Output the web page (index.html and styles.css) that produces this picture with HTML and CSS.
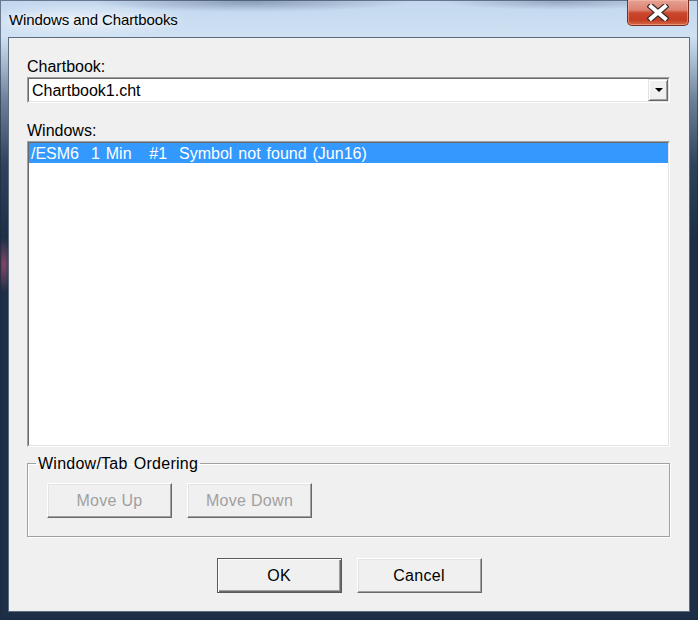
FILE: index.html
```html
<!DOCTYPE html>
<html>
<head>
<meta charset="utf-8">
<title>Windows and Chartbooks</title>
<link rel="stylesheet" href="styles.css">
</head>
<body>
<div class="window">
  <div class="titlebar">
    <span class="title">Windows and Chartbooks</span>
    <div class="close">
      <svg width="22" height="17" viewBox="0 0 22 17">
        <path d="M4 2.5 L18 14.5 M18 2.5 L4 14.5" stroke="#3b2a2a" stroke-width="6.4" stroke-linecap="square" fill="none"/>
        <path d="M4 2.5 L18 14.5 M18 2.5 L4 14.5" stroke="#ffffff" stroke-width="4" stroke-linecap="square" fill="none"/>
      </svg>
    </div>
  </div>
  <div class="client">
    <div class="label">Chartbook:</div>
    <div class="combo">
      <div class="sunken-inner combo-inner">
        <span class="combo-text">Chartbook1.cht</span>
        <div class="drop"><span class="tri"></span></div>
      </div>
    </div>
    <div class="label label-windows">Windows:</div>
    <div class="list">
      <div class="sunken-inner list-inner">
        <div class="row selected">/ESM6  1 Min   #1  Symbol not found (Jun16)</div>
      </div>
    </div>
    <fieldset class="group">
      <legend class="group-title">Window/Tab Ordering</legend>
      <div class="group-buttons">
        <button class="btn disabled">Move Up</button>
        <button class="btn disabled">Move Down</button>
      </div>
    </fieldset>
    <div class="footer">
      <button class="btn default">OK</button>
      <button class="btn">Cancel</button>
    </div>
  </div>
</div>
</body>
</html>
```

FILE: styles.css
```css
html, body {
  margin: 0;
  padding: 0;
}
body {
  width: 698px;
  height: 620px;
  overflow: hidden;
  font-family: "Liberation Sans", Arial, sans-serif;
  font-size: 16px;
  color: #000;
}
.window {
  box-sizing: border-box;
  width: 698px;
  height: 620px;
  padding: 0 8px 8px 8px;
  display: flex;
  flex-direction: column;
  background:
    radial-gradient(ellipse 160px 10px at 250px 2px, rgba(70, 90, 120, 0.45), rgba(70, 90, 120, 0) 100%),
    radial-gradient(ellipse 120px 8px at 560px 2px, rgba(70, 90, 120, 0.35), rgba(70, 90, 120, 0) 100%),
    radial-gradient(ellipse 110px 18px at 80px 20px, rgba(255, 255, 255, 0.55), rgba(255, 255, 255, 0) 100%),
    radial-gradient(ellipse 8px 28px at 4px 265px, rgba(150, 75, 105, 0.85), rgba(150, 75, 105, 0) 100%),
    linear-gradient(to bottom, #c2d7ee 0px, #cfe1f3 36px, #b3c7dc 55px, #6d8099 100px, #2e425b 165px, #1c2f47 240px, #1c2f47 100%);
  box-shadow: inset 0 0 0 1px rgba(30, 40, 60, 0.55);
}
.titlebar {
  height: 37px;
  display: flex;
  align-items: flex-start;
  justify-content: space-between;
  flex-shrink: 0;
}
.title {
  font-family: "Liberation Sans", Arial, sans-serif;
  font-size: 15px;
  line-height: 17px;
  margin-top: 11px;
  margin-left: 1px;
  letter-spacing: -0.1px;
  color: #000;
  text-shadow: 0 0 6px rgba(255, 255, 255, 0.9);
}
.close {
  width: 62px;
  height: 26px;
  box-sizing: border-box;
  margin-right: 1px;
  border: 1px solid #7a2e24;
  border-top: none;
  border-radius: 0 0 5px 5px;
  background: linear-gradient(to bottom, #e6a294 0%, #dc8270 40%, #c9462d 52%, #c53d23 80%, #d86a48 100%);
  box-shadow: inset 0 0 0 1px rgba(255, 200, 180, 0.45);
  display: flex;
  align-items: center;
  justify-content: center;
}
.close svg {
  display: block;
  margin-top: -1px;
}
.client {
  box-sizing: border-box;
  flex: 1;
  background: #f0f0f0;
  border: 1px solid #5c6b7d;
  padding: 20px 19px 0 18px;
  display: flex;
  flex-direction: column;
}
.label {
  line-height: 18px;
  height: 18px;
  white-space: pre;
}
.label-windows {
  margin-top: 19px;
}
.combo, .list {
  border: 1px solid;
  border-color: #a0a0a0 #ffffff #ffffff #a0a0a0;
}
.combo {
  margin-top: 1px;
  height: 26px;
  box-sizing: border-box;
}
.sunken-inner {
  border: 1px solid;
  border-color: #696969 #e3e3e3 #e3e3e3 #696969;
  box-sizing: border-box;
  height: 100%;
}
.combo-inner {
  background: #fff;
  display: flex;
  align-items: center;
}
.combo-text {
  flex: 1;
  padding-left: 3px;
  line-height: 18px;
  padding-top: 1px;
}
.drop {
  width: 20px;
  height: 22px;
  box-sizing: border-box;
  border: 1px solid;
  border-color: #e3e3e3 #696969 #696969 #e3e3e3;
  box-shadow: inset 1px 1px 0 #ffffff, inset -1px -1px 0 #a0a0a0;
  background: #f0f0f0;
  display: flex;
  align-items: center;
  justify-content: center;
}
.tri {
  width: 0;
  height: 0;
  border-left: 4px solid transparent;
  border-right: 4px solid transparent;
  border-top: 4px solid #000;
  margin-left: 1px;
}
.list {
  margin-top: 1px;
  height: 306px;
  box-sizing: border-box;
}
.list-inner {
  background: #fff;
}
.row {
  height: 20px;
  box-sizing: border-box;
  padding: 2px 0 0 2px;
  line-height: 18px;
  white-space: pre;
  word-spacing: 1.5px;
}
.row.selected {
  background: #3399ff;
  color: #fff;
}
.group {
  margin: 6px 0 0 0;
  padding: 10px 0 18px 8px;
  border: 1px solid #a0a0a0;
  box-shadow: inset 1px 1px 0 #ffffff, 1px 1px 0 #ffffff;
  min-width: 0;
}
.group-title {
  padding: 2px 2px 0 2px;
  margin-left: 0;
  line-height: 18px;
  height: 20px;
  box-sizing: border-box;
  white-space: pre;
  word-spacing: 1.5px;
  letter-spacing: 0.25px;
}
.group-buttons {
  display: flex;
  gap: 15px;
  margin-left: 11px;
}
.btn {
  width: 125px;
  height: 35px;
  box-sizing: border-box;
  margin: 0;
  padding: 0;
  font-family: "Liberation Sans", Arial, sans-serif;
  font-size: 16px;
  line-height: 18px;
  letter-spacing: 0.3px;
  color: #000;
  background: #f0f0f0;
  border: 1px solid;
  border-color: #ffffff #696969 #696969 #ffffff;
  box-shadow: inset -1px -1px 0 #a0a0a0, inset 1px 1px 0 #e3e3e3;
  display: flex;
  align-items: center;
  justify-content: center;
}
.btn.disabled {
  color: #a0a0a0;
}
.btn.default {
  border: 1px solid #5a5a5a;
  box-shadow: inset 1px 1px 0 #ffffff, inset -1px -1px 0 #696969, inset -2px -2px 0 #a0a0a0;
}
.footer {
  margin-top: 21px;
  display: flex;
  justify-content: center;
  gap: 15px;
  padding-left: 1px;
}
```
